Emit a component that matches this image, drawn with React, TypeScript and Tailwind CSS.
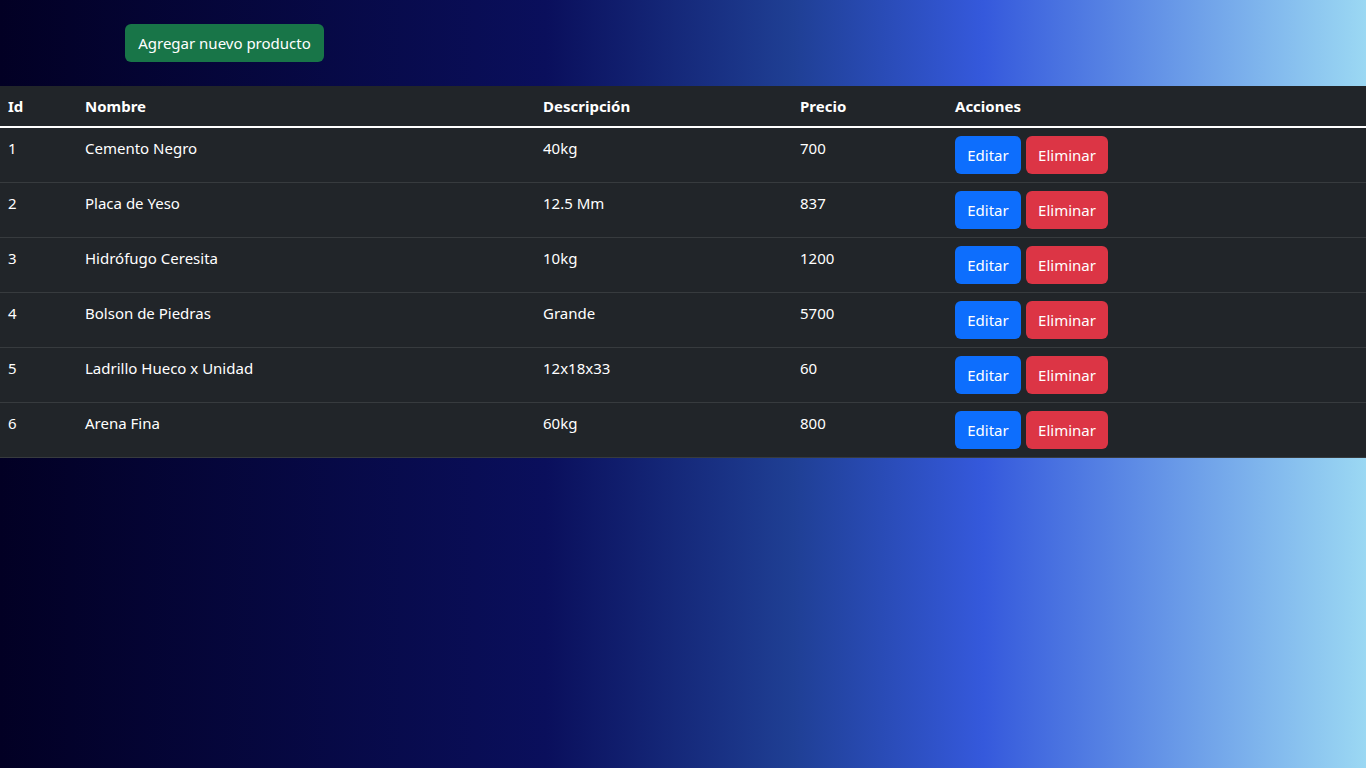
import React from 'react';

type Producto = {
  id: number;
  nombre: string;
  descripcion: string;
  precio: number;
};

const productos: Producto[] = [
  { id: 1, nombre: 'Cemento Negro', descripcion: '40kg', precio: 700 },
  { id: 2, nombre: 'Placa de Yeso', descripcion: '12.5 Mm', precio: 837 },
  { id: 3, nombre: 'Hidrófugo Ceresita', descripcion: '10kg', precio: 1200 },
  { id: 4, nombre: 'Bolson de Piedras', descripcion: 'Grande', precio: 5700 },
  { id: 5, nombre: 'Ladrillo Hueco x Unidad', descripcion: '12x18x33', precio: 60 },
  { id: 6, nombre: 'Arena Fina', descripcion: '60kg', precio: 800 },
];

const App: React.FC = () => {
  return (
    <div
      className="min-h-screen w-full text-white bg-[linear-gradient(90deg,#020024_0%,#0a0f5c_40%,#1f3f94_58%,#3559dc_72%,#9bd8f3_100%)]"
      style={{ fontFamily: '"Noto Sans", "Open Sans", sans-serif' }}
    >
      <div className="h-[86px] pt-6 pl-[125px]">
        <button className="h-[38px] w-[199px] rounded-md bg-[#187548] text-white text-[15px] leading-6">
          Agregar nuevo producto
        </button>
      </div>

      <table className="w-full table-fixed border-collapse bg-[#212529] text-[15px] leading-6">
        <colgroup>
          <col className="w-[77px]" />
          <col className="w-[458px]" />
          <col className="w-[257px]" />
          <col className="w-[155px]" />
          <col />
        </colgroup>
        <thead>
          <tr className="border-b-2 border-white">
            <th className="p-2 text-left font-bold">Id</th>
            <th className="p-2 text-left font-bold">Nombre</th>
            <th className="p-2 text-left font-bold">Descripción</th>
            <th className="p-2 text-left font-bold">Precio</th>
            <th className="p-2 text-left font-bold">Acciones</th>
          </tr>
        </thead>
        <tbody>
          {productos.map((p) => (
            <tr key={p.id} className="border-b border-[#373b3e]">
              <td className="p-2 align-top">{p.id}</td>
              <td className="p-2 align-top">{p.nombre}</td>
              <td className="p-2 align-top">{p.descripcion}</td>
              <td className="p-2 align-top">{p.precio}</td>
              <td className="p-2 align-top">
                <div className="flex gap-[5px]">
                  <button className="h-[38px] w-[66px] rounded-md bg-[#0d6efd] text-white">Editar</button>
                  <button className="h-[38px] w-[82px] rounded-md bg-[#dc3545] text-white">Eliminar</button>
                </div>
              </td>
            </tr>
          ))}
        </tbody>
      </table>
    </div>
  );
};

export default App;
